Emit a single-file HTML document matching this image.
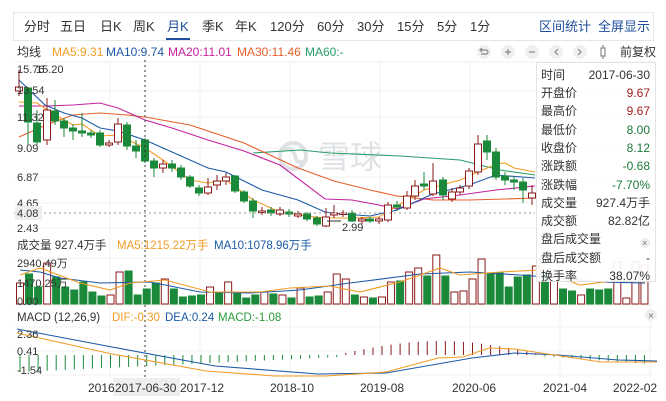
<!DOCTYPE html>
<html><head><meta charset="utf-8"><style>
body{margin:0;width:666px;height:401px;background:#fff;overflow:hidden;font-family:"Liberation Sans","Noto Sans CJK SC",sans-serif;}
svg{position:absolute;left:0;top:0}
</style></head><body>
<svg id="s" width="666" height="401" xmlns="http://www.w3.org/2000/svg" font-family="Liberation Sans, Noto Sans CJK SC, sans-serif">
<rect x="13.5" y="12.5" width="640" height="28" fill="#fff" stroke="#e6e6e6"/>
<g font-size="13" fill="#333">
<text x="24" y="31">分时</text><text x="60" y="31">五日</text><text x="100" y="31">日K</text><text x="133" y="31">周K</text>
<text x="167" y="31" fill="#1f4e9c">月K</text><text x="202" y="31">季K</text><text x="235" y="31">年K</text><text x="270" y="31">120分</text>
<text x="317" y="31">60分</text><text x="357" y="31">30分</text><text x="397" y="31">15分</text><text x="437" y="31">5分</text><text x="470" y="31">1分</text>
<text x="539" y="31" fill="#1f4e9c">区间统计</text><text x="598" y="31" fill="#1f4e9c">全屏显示</text>
</g>
<rect x="166" y="38" width="24" height="2" fill="#1f4e9c"/>
<g font-size="12">
<text x="17" y="56" fill="#333">均线</text>
<text x="52" y="56" fill="#f29c25">MA5:9.31</text>
<text x="106" y="56" fill="#1c5aa6">MA10:9.74</text>
<text x="168" y="56" fill="#c4239e">MA20:11.01</text>
<text x="237" y="56" fill="#e5602b">MA30:11.46</text>
<text x="305" y="56" fill="#2a9d6a">MA60:-</text>
<text x="620" y="56" fill="#333">前复权</text>
</g>
<g fill="#eef0f2"><circle cx="484" cy="52" r="7"/><circle cx="508" cy="52" r="7"/><circle cx="532" cy="52" r="7"/><circle cx="556" cy="52" r="7"/><circle cx="580" cy="52" r="7"/></g>
<g stroke="#888" stroke-width="1.2" fill="none"><path d="M481 50h5a2 2 0 0 1 0 4h-5M482 48l-2 2 2 2"/><path d="M505 52h6M508 49v6"/><path d="M529 52h6"/><path d="M558 49l-3 3 3 3"/><path d="M578 49l3 3-3 3"/><rect x="601" y="48" width="4" height="8"/><path d="M603 45v3M603 56v3"/></g>
<g id="grid" stroke="#f0f0f0" stroke-width="1"></g>
<g opacity="0.9"><circle cx="293" cy="156" r="13" fill="none" stroke="#dcdfe3" stroke-width="4"/><path d="M283 150q10 -4 12 6t12 4" stroke="#dcdfe3" stroke-width="4" fill="none"/>
<text x="318" y="168" font-size="32" fill="#dcdfe3">雪球</text></g>
<g id="ma"></g>
<g id="cd"></g>
<line x1="14" y1="213" x2="535" y2="213" stroke="#999" stroke-dasharray="2,3"/>
<line x1="145" y1="60" x2="145" y2="378" stroke="#333" stroke-dasharray="2,3"/>
<g font-size="11" fill="#333">
<text x="17" y="73">15.76</text><text x="36" y="73">15.20</text><text x="17" y="94">13.54</text><text x="17" y="121">11.32</text>
<text x="17" y="152">9.09</text><text x="17" y="181">6.87</text><text x="17" y="207">4.65</text>
<rect x="15" y="206" width="27" height="14" fill="#eee"/><text x="17" y="217">4.08</text>
<text x="17" y="232">2.43</text>
<path d="M327 221h14" stroke="#333"/><text x="342" y="231">2.99</text>
</g>
<g font-size="11.5">
<text x="17" y="249" fill="#333">成交量 927.4万手</text>
<text x="117" y="249" fill="#f29c25">MA5:1215.22万手</text>
<text x="214" y="249" fill="#1c5aa6">MA10:1078.96万手</text>
</g>
<g id="vol"></g>
<g font-size="11" fill="#333"><text x="17" y="267">2940.49万</text><text x="17" y="287">1470.25万</text><text x="17" y="305">0.00</text></g>
<g font-size="11.5">
<text x="17" y="321" fill="#333">MACD (12,26,9)</text>
<text x="112" y="321" fill="#f29c25">DIF:-0.30</text>
<text x="165" y="321" fill="#1c5aa6">DEA:0.24</text>
<text x="218" y="321" fill="#2a9d3a">MACD:-1.08</text>
</g>
<g id="macd"></g>
<g font-size="11" fill="#333"><text x="17" y="338">2.36</text><text x="17" y="355">0.41</text><text x="17" y="374">-1.54</text></g>
<g font-size="12" fill="#333">
<rect x="113" y="378" width="67" height="18" fill="#eee"/>
<text x="88" y="392">2016</text><text x="115" y="392">2017-06-30</text><text x="180" y="392">2017-12</text>
<text x="270" y="392">2018-10</text><text x="360" y="392">2019-08</text><text x="452" y="392">2020-06</text>
<text x="543" y="392">2021-04</text><text x="613" y="392">2022-02</text>
</g>
<g fill="#eee"><circle cx="651" cy="315" r="6"/></g>
<text x="648" y="319" font-size="10" fill="#777">×</text>
<rect x="536.5" y="62.5" width="119" height="219" fill="#fff" fill-opacity="0.9" stroke="#e3e3e3"/>
<g font-size="12" fill="#333">
<text x="541" y="79">时间</text><text x="650" y="79" text-anchor="end">2017-06-30</text>
<text x="541" y="97">开盘价</text><text x="650" y="97" text-anchor="end" fill="#a31c1c">9.67</text>
<text x="541" y="115">最高价</text><text x="650" y="115" text-anchor="end" fill="#a31c1c">9.67</text>
<text x="541" y="134">最低价</text><text x="650" y="134" text-anchor="end" fill="#1d7a3a">8.00</text>
<text x="541" y="152">收盘价</text><text x="650" y="152" text-anchor="end" fill="#1d7a3a">8.12</text>
<text x="541" y="170">涨跌额</text><text x="650" y="170" text-anchor="end" fill="#1d7a3a">-0.68</text>
<text x="541" y="189">涨跌幅</text><text x="650" y="189" text-anchor="end" fill="#1d7a3a">-7.70%</text>
<text x="541" y="207">成交量</text><text x="650" y="207" text-anchor="end">927.4万手</text>
<text x="541" y="225">成交额</text><text x="650" y="225" text-anchor="end">82.82亿</text>
<text x="541" y="243">盘后成交量</text>
<text x="541" y="262">盘后成交额</text><text x="650" y="262" text-anchor="end">-</text>
<text x="541" y="280">换手率</text><text x="650" y="280" text-anchor="end">38.07%</text>
</g>
<circle cx="645" cy="243" r="5" fill="#eee"/><text x="642" y="246" font-size="9" fill="#777">×</text>
</svg>
<script>
var NS="http://www.w3.org/2000/svg";
function el(p,t,a){var e=document.createElementNS(NS,t);for(var k in a)e.setAttribute(k,a[k]);document.getElementById(p).appendChild(e);return e;}
var R="#8b1a1a",G="#1a8a3a";
[110,200,290,380,470,560,650].forEach(function(x){el("grid","line",{x1:x,y1:60,x2:x,y2:378});});
[62,91,117,148,177,203,228,258,305,327,351,375].forEach(function(y){el("grid","line",{x1:14,y1:y,x2:653,y2:y});});
var C=[[19,87,91,'r',70,96],[28,88,122,'g',88,145],[37,123,142,'g',110,145],[47,110,140,'r',98,145],[55,111,121,'g',100,125],[64,121,128,'g',118,137],[73,128,131,'g',124,140],[82,131,133,'g',113,137],[91,133,135,'g',130,138],[100,133,145,'g',130,147],[109,143,145,'r',140,147],[118,124,142,'r',118,145],[127,125,146,'g',122,150],[136,146,151,'g',140,158],[145,140,161,'g',138,163],[154,161,168,'g',158,177],[163,164,168,'r',160,173],[172,164,168,'g',160,172],[181,168,177,'g',165,180],[190,177,186,'g',175,188],[199,188,193,'g',185,196],[208,187,193,'r',178,195],[217,181,185,'r',175,190],[226,177,181,'r',173,185],[235,176,191,'g',175,193],[244,192,201,'g',190,203],[253,201,211,'g',198,218],[262,211,212,'r',207,215],[271,210,213,'g',207,216],[280,210,214,'r',207,216],[289,212,214,'g',209,217],[298,214,216,'r',211,218],[307,214,219,'g',212,221],[317,218,224,'g',216,226],[326,217,226,'r',208,227],[334,213,215,'r',205,218],[343,213,214,'r',210,217],[352,213,221,'g',210,222],[362,219,221,'r',217,224],[370,219,221,'g',217,223],[379,219,221,'r',217,224],[388,205,220,'r',202,222],[397,205,207,'g',201,211],[407,196,208,'r',191,210],[415,186,196,'r',180,200],[424,184,186,'g',172,190],[433,181,194,'r',163,196],[443,180,195,'g',177,200],[452,192,199,'r',188,202],[460,188,192,'r',185,195],[469,171,186,'r',168,189],[478,144,172,'r',135,175],[487,141,152,'g',135,160],[496,152,177,'g',148,180],[505,176,180,'g',172,185],[514,180,182,'g',176,190],[523,182,190,'g',178,203],[532,193,198,'r',185,205]];
C.forEach(function(c){var col=c[3]=='r'?R:G;
el("cd","line",{x1:c[0],y1:c[4],x2:c[0],y2:c[5],stroke:col});
el("cd","rect",{x:c[0]-3.5,y:c[1],width:7,height:Math.max(1.5,c[2]-c[1]),fill:c[3]=='r'?'#fff':col,stroke:col});});
function line(p,pts,col,w){el(p,"polyline",{points:pts.map(function(a){return a.join(",")}).join(" "),fill:"none",stroke:col,"stroke-width":w||1.1});}
line("ma",[[253,153],[300,150],[330,153],[400,156],[460,160],[500,170],[535,175]],"#2a9d6a");
line("ma",[[19,137],[46,125],[73,115],[100,113],[127,115],[145,117],[190,125],[244,143],[298,168],[334,181],[370,190],[397,196],[433,200],[469,200],[505,199],[535,198]],"#e5602b");
line("ma",[[19,106],[46,106],[73,105],[100,103],[118,108],[145,120],[172,128],[208,140],[244,151],[280,165],[325,199],[352,200],[379,205],[397,209],[424,199],[460,195],[496,190],[535,186]],"#c4239e");
line("ma",[[19,80],[45,105],[64,113],[82,118],[100,128],[118,131],[145,140],[172,152],[208,168],[226,172],[262,190],[298,200],[325,212],[343,214],[370,216],[397,210],[433,194],[469,185],[496,175],[535,178]],"#1c5aa6");
line("ma",[[19,102],[37,103],[55,115],[73,125],[82,124],[100,136],[118,135],[145,148],[163,160],[190,180],[208,183],[226,180],[253,200],[280,212],[307,216],[325,218],[352,218],[379,217],[397,206],[424,190],[460,180],[478,172],[496,164],[505,163],[514,168],[535,172]],"#f29c25");
var V="r283 g274 g287 r263 g277 g287 g290 g282 g292 g296 r295 r272 g271 g295 g289 g283 r279 g289 g297 g296 g295 r287 g293 r282 g293 g298 g295 r292 g294 r295 g298 r288 g297 g296 r292 r274 r279 g295 r297 g298 r297 r282 g281 r272 r268 g276 r255 g276 r292 r291 r279 r259 g273 g273 g287 g277 g275 r266 g272 r270 g289 g291 r295 g289 g290 g289 r262 r298 r262 r265 g289 r296".split(" ");
V.forEach(function(v,i){var x=20+9.05*i;if(x>652)return;var t=+v.slice(1),r=v[0]=='r',col=r?R:G;
el("vol","rect",{x:x-3.5,y:t,width:7,height:304-t,fill:r?'#fff':col,stroke:col});});
line("vol",[[20,270],[40,272],[60,278],[100,283],[150,282],[200,292],[250,293],[300,290],[350,283],[420,274],[470,272],[520,275],[560,278],[600,282],[645,283]],"#1c5aa6");
line("vol",[[20,275],[40,268],[80,283],[110,290],[130,283],[165,280],[210,292],[260,292],[290,288],[330,286],[360,292],[400,282],[440,268],[460,275],[500,272],[540,270],[580,285],[620,280],[645,282]],"#f29c25");
for(var i=0;i<70;i++){var x=20+9.05*i,h;
 if(x<340){h=17*(1-x/360)+1;el("macd","line",{x1:x,y1:355,x2:x,y2:355+h,stroke:G});}
 else if(x<540){var d=Math.sin((x-340)/200*Math.PI)*13+1;el("macd","line",{x1:x,y1:355,x2:x,y2:355-d,stroke:R});}
 else{h=(x-540)/110*8+1;el("macd","line",{x1:x,y1:355,x2:x,y2:355+h,stroke:G});}}
line("macd",[[17,329],[112,347],[215,366],[318,374],[386,373],[472,358],[515,353],[558,355],[618,360],[657,361]],"#1c5aa6");
line("macd",[[17,333],[112,354],[206,371],[275,376],[326,376],[386,372],[438,358],[463,357],[489,348],[515,349],[541,353],[601,362],[657,362]],"#f29c25");
</script>
</body></html>
